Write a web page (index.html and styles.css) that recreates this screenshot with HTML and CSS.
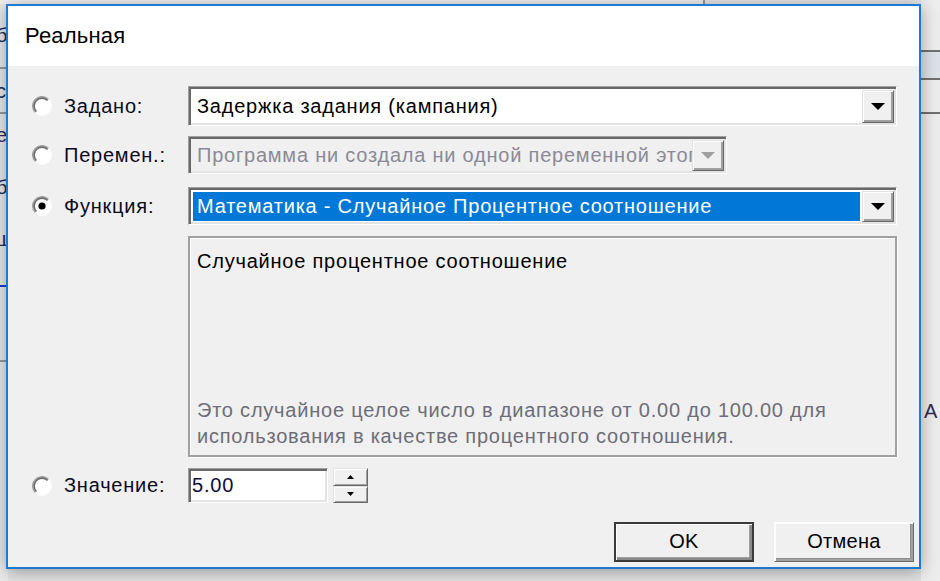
FILE: index.html
```html
<!DOCTYPE html>
<html lang="ru">
<head>
<meta charset="utf-8">
<title>Реальная</title>
<link rel="stylesheet" href="styles.css">
</head>
<body>
<div class="desk">
  <div class="bgwin-left">
    <div class="bl-glyph g1">б</div>
    <div class="bl-line l1"></div>
    <div class="bl-glyph g2">с</div>
    <div class="bl-line l2"></div>
    <div class="bl-glyph g3">е</div>
    <div class="bl-glyph g4">б</div>
    <div class="bl-glyph g5">ш</div>
    <div class="bl-link"></div>
    <div class="bl-line l3"></div>
  </div>
  <div class="bgwin-top"></div>
  <div class="bgwin-right">
    <div class="br-line b1"></div>
    <div class="br-band"></div>
    <div class="br-line b2"></div>
    <div class="br-line b3"></div>
    <div class="br-glyph">А</div>
  </div>

  <div class="dialog">
    <div class="titlebar"><span class="title">Реальная</span></div>
    <div class="client">
      <div class="row r1">
        <div class="lcell">
          <span class="radio"><svg width="20" height="20" viewBox="0 0 20 20"><circle cx="10" cy="10" r="9" fill="#fff"/><path d="M3.6 16.4 A9 9 0 0 1 16.4 3.6" fill="none" stroke="#a0a0a0" stroke-width="2"/><path d="M4.5 15.5 A7.7 7.7 0 0 1 15.5 4.5" fill="none" stroke="#696969" stroke-width="1.4"/><path d="M3.6 16.4 A9 9 0 0 0 16.4 3.6" fill="none" stroke="#fdfdfd" stroke-width="2"/></svg></span>
          <span class="lbl">Задано:</span>
        </div>
        <div class="combo w-full h40">
          <div class="field">Задержка задания (кампания)</div>
          <div class="dbtn"><svg width="14" height="7" viewBox="0 0 14 7"><polygon points="0,0 14,0 7,7" fill="#000"/></svg></div>
        </div>
      </div>

      <div class="row r2">
        <div class="lcell">
          <span class="radio"><svg width="20" height="20" viewBox="0 0 20 20"><circle cx="10" cy="10" r="9" fill="#fff"/><path d="M3.6 16.4 A9 9 0 0 1 16.4 3.6" fill="none" stroke="#a0a0a0" stroke-width="2"/><path d="M4.5 15.5 A7.7 7.7 0 0 1 15.5 4.5" fill="none" stroke="#696969" stroke-width="1.4"/><path d="M3.6 16.4 A9 9 0 0 0 16.4 3.6" fill="none" stroke="#fdfdfd" stroke-width="2"/></svg></span>
          <span class="lbl">Перемен.:</span>
        </div>
        <div class="combo disabled w-short h38">
          <div class="field">Программа ни создала ни одной переменной этого типа</div>
          <div class="dbtn"><svg width="14" height="7" viewBox="0 0 14 7"><polygon points="0,0 14,0 7,7" fill="#a0a0a0"/></svg></div>
        </div>
      </div>

      <div class="row r3">
        <div class="lcell">
          <span class="radio"><svg width="20" height="20" viewBox="0 0 20 20"><circle cx="10" cy="10" r="9" fill="#fff"/><path d="M3.6 16.4 A9 9 0 0 1 16.4 3.6" fill="none" stroke="#a0a0a0" stroke-width="2"/><path d="M4.5 15.5 A7.7 7.7 0 0 1 15.5 4.5" fill="none" stroke="#696969" stroke-width="1.4"/><path d="M3.6 16.4 A9 9 0 0 0 16.4 3.6" fill="none" stroke="#fdfdfd" stroke-width="2"/><circle cx="10" cy="10" r="3.6" fill="#000"/></svg></span>
          <span class="lbl">Функция:</span>
        </div>
        <div class="combo w-full h38">
          <div class="field"><span class="sel">Математика - Случайное Процентное соотношение</span></div>
          <div class="dbtn"><svg width="14" height="7" viewBox="0 0 14 7"><polygon points="0,0 14,0 7,7" fill="#000"/></svg></div>
        </div>
      </div>

      <div class="row r-desc">
        <div class="lcell"></div>
        <div class="desc">
          <div class="desc-title">Случайное процентное соотношение</div>
          <div class="desc-body">Это случайное целое число в диапазоне от 0.00 до 100.00 для<br>использования в качестве процентного соотношения.</div>
        </div>
      </div>

      <div class="row r4">
        <div class="lcell">
          <span class="radio"><svg width="20" height="20" viewBox="0 0 20 20"><circle cx="10" cy="10" r="9" fill="#fff"/><path d="M3.6 16.4 A9 9 0 0 1 16.4 3.6" fill="none" stroke="#a0a0a0" stroke-width="2"/><path d="M4.5 15.5 A7.7 7.7 0 0 1 15.5 4.5" fill="none" stroke="#696969" stroke-width="1.4"/><path d="M3.6 16.4 A9 9 0 0 0 16.4 3.6" fill="none" stroke="#fdfdfd" stroke-width="2"/></svg></span>
          <span class="lbl">Значение:</span>
        </div>
        <div class="edit">5.00</div>
        <div class="spin">
          <div class="sbtn"><svg width="7" height="4" viewBox="0 0 7 4"><polygon points="0,4 7,4 3.5,0" fill="#000"/></svg></div>
          <div class="sbtn"><svg width="7" height="4" viewBox="0 0 7 4"><polygon points="0,0 7,0 3.5,4" fill="#000"/></svg></div>
        </div>
      </div>

      <div class="buttons">
        <div class="btn default">OK</div>
        <div class="btn">Отмена</div>
      </div>
    </div>
  </div>
</div>
</body>
</html>
```

FILE: styles.css
```css
* { box-sizing: border-box; }
html, body { margin: 0; padding: 0; }
body {
  width: 940px;
  height: 581px;
  overflow: hidden;
  background: #e4e4e4;
  font-family: "Liberation Sans", Arial, sans-serif;
}
.desk {
  position: relative;
  width: 940px;
  height: 581px;
  overflow: hidden;
  background: linear-gradient(#ececec, #e2e2e2);
}

/* background windows */
.bgwin-left {
  position: absolute;
  left: 0; top: 0;
  width: 8px; height: 581px;
  background: #eaeaea;
  overflow: hidden;
}
.bl-glyph {
  position: absolute;
  left: -4px;
  font-size: 20px;
  color: #2a2a55;
}
.g1 { top: 24px; }
.g2 { top: 80px; }
.g3 { top: 124px; }
.g4 { top: 176px; }
.g5 { top: 228px; }
.bl-line { position: absolute; left: 0; width: 8px; height: 2px; background: #9a9a9a; }
.l1 { top: 67px; }
.l2 { top: 112px; }
.l3 { top: 360px; }
.bl-link { position: absolute; left: 0; top: 285px; width: 6px; height: 2px; background: #2233dd; }

.bgwin-top {
  position: absolute;
  left: 0; top: 0;
  width: 940px; height: 4px;
  background: linear-gradient(90deg, #f2f2f2 0, #f2f2f2 703px, #9a9a9a 703px, #9a9a9a 705px, #e6e6e6 705px);
}
.bgwin-right {
  position: absolute;
  left: 921px; top: 0;
  width: 19px; height: 581px;
  background: #ededed;
  overflow: hidden;
}
.br-line { position: absolute; left: 0; width: 19px; height: 2px; background: #707070; }
.b1 { top: 50px; }
.b2 { top: 78px; }
.b3 { top: 112px; }
.br-band { position: absolute; left: 0; top: 52px; width: 19px; height: 26px; background: #dde2e9; }
.br-glyph {
  position: absolute;
  left: 3px; top: 400px;
  font-size: 20px;
  color: #2a2a55;
}

/* dialog */
.dialog {
  position: absolute;
  left: 6px; top: 4px;
  width: 915px;
  height: 565px;
  border: 2px solid #1c7ad2;
  background: #f0f0f0;
  box-shadow: 0 2px 16px rgba(0, 0, 0, 0.35);
  display: flex;
  flex-direction: column;
}
.titlebar {
  height: 60px;
  flex: none;
  background: #fff;
  display: flex;
  align-items: center;
  padding-left: 17px;
}
.title {
  font-size: 22px;
  color: #000;
  letter-spacing: 0.2px;
}
.client {
  flex: 1;
  padding: 20px 5px 5px 0;
  display: flex;
  flex-direction: column;
  font-size: 20px;
  letter-spacing: 0.78px;
  color: #000;
}
.row {
  display: flex;
  align-items: center;
  flex: none;
}
.r1 { height: 40px; }
.r2 { height: 38px; margin-top: 10px; }
.r3 { height: 38px; margin-top: 13px; }
.r-desc { height: 221px; margin-top: 11px; align-items: stretch; }
.r4 { height: 35px; margin-top: 11px; }

.lcell {
  width: 180px;
  flex: none;
  display: flex;
  align-items: center;
  padding-left: 24px;
}
.radio { width: 20px; height: 20px; display: block; flex: none; }
.radio svg { display: block; }
.lbl { margin-left: 12px; white-space: nowrap; color: #0a0a1e; }

/* sunken 3d controls */
.combo, .edit {
  border: 1px solid;
  border-color: #a0a0a0 #ffffff #ffffff #a0a0a0;
  box-shadow: inset 2px 2px 0 #696969, inset -2px -2px 0 #e3e3e3;
  background: #fff;
}
.combo {
  display: flex;
  padding: 3px 2px 2px 3px;
  height: 100%;
}
.w-full { width: 709px; }
.w-short { width: 539px; }
.h40 { height: 40px; }
.h38 { height: 38px; }
.combo.disabled { background: #f0f0f0; color: #8a8a96; }
.field {
  flex: 1;
  min-width: 0;
  overflow: hidden;
  white-space: nowrap;
  display: flex;
  align-items: center;
  padding-left: 5px;
}
.r3 .field { padding: 1px 2px 1px 1px; align-items: stretch; }
.sel {
  flex: 1;
  background: #0078d7;
  color: #fff;
  display: flex;
  align-items: center;
  padding-left: 4px;
}
.dbtn {
  width: 32px;
  flex: none;
  background: #f0f0f0;
  border: 1px solid;
  border-color: #e3e3e3 #696969 #696969 #e3e3e3;
  box-shadow: inset 1px 1px 0 #fff, inset -2px -2px 0 #a0a0a0;
  display: flex;
  align-items: center;
  justify-content: center;
  padding-right: 1px;
}
.dbtn svg { display: block; }

.desc {
  width: 709px;
  border: 2px solid #a0a0a0;
  box-shadow: inset 1px 1px 0 #fff, 1px 1px 0 #fff;
  display: flex;
  flex-direction: column;
  justify-content: space-between;
  padding: 10px 8px 6px 7px;
}
.desc-title { line-height: 26px; }
.desc-body { line-height: 26px; color: #6d6d78; }

.edit {
  width: 140px;
  height: 35px;
  display: flex;
  align-items: center;
  padding-left: 3px;
  color: #0d0d3a;
}
.spin {
  width: 35px;
  height: 35px;
  margin-left: 5px;
  display: flex;
  flex-direction: column;
}
.sbtn {
  flex: 1;
  background: #f0f0f0;
  border: 1px solid;
  border-color: #e3e3e3 #696969 #696969 #e3e3e3;
  box-shadow: inset 1px 1px 0 #fff, inset -1px -1px 0 #a0a0a0;
  display: flex;
  align-items: center;
  justify-content: center;
}
.sbtn svg { display: block; }

.buttons {
  margin-top: 19px;
  display: flex;
  justify-content: flex-end;
  gap: 20px;
  flex: none;
}
.btn {
  width: 140px;
  height: 40px;
  background: #f0f0f0;
  border: 1px solid;
  border-color: #fff #696969 #696969 #fff;
  box-shadow: inset 1px 1px 0 #fdfdfd, inset -2px -2px 0 #a0a0a0, inset -3px -3px 0 #8f8f8f;
  display: flex;
  align-items: center;
  justify-content: center;
  padding-bottom: 2px;
  letter-spacing: 0.3px;
}
.btn.default {
  border: 2px solid #3a3a3a;
  box-shadow: inset 1px 1px 0 #fff, inset -2px -2px 0 #8a8a8a, inset -3px -3px 0 #a0a0a0;
}
```
